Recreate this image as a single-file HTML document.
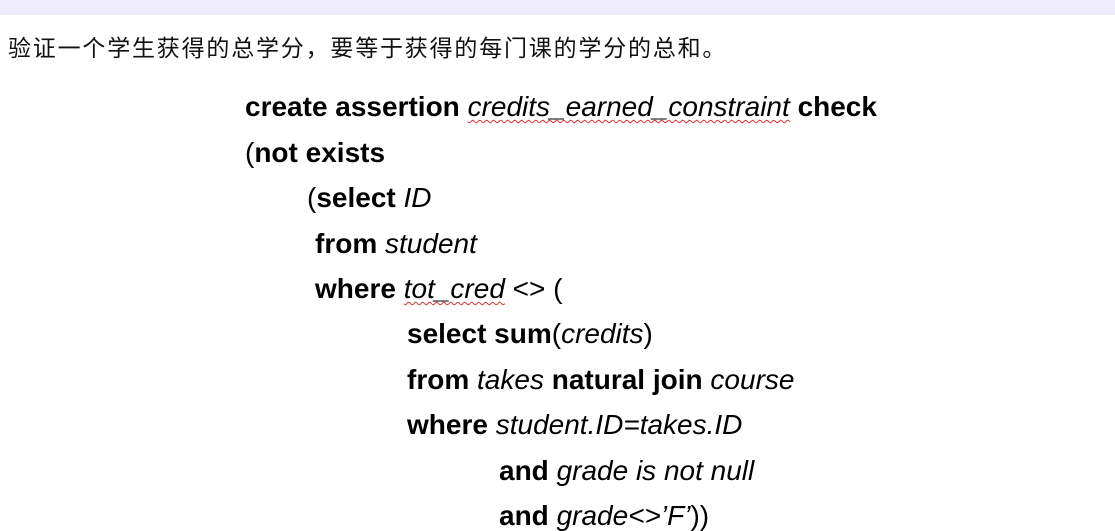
<!DOCTYPE html>
<html><head><meta charset="utf-8"><style>
body{margin:0;width:1115px;height:524px;overflow:hidden;background:#fff;position:relative;font-family:"Liberation Sans",Arial,sans-serif;color:#000}
.bar{position:absolute;left:0;top:0;width:1115px;height:15px;background:#efedfc}
.cn{position:absolute;left:8px;top:34px;font-size:23px;letter-spacing:1.8px;line-height:28px;font-family:"Liberation Sans","Noto Sans CJK SC",sans-serif;color:#111}
.l{position:absolute;font-size:28px;line-height:30px;white-space:nowrap}
b{font-weight:bold}
.w{text-decoration:underline wavy #e03030;text-decoration-thickness:1px;text-underline-offset:3px}
</style></head><body>
<div class="bar"></div>
<div class="cn">验证一个学生获得的总学分，要等于获得的每门课的学分的总和。</div>
<div class="l" style="left:245px;top:92px"><b>create assertion</b> <i class="w">credits_earned_constraint</i> <b>check</b></div>
<div class="l" style="left:245px;top:138px">(<b>not exists</b></div>
<div class="l" style="left:307px;top:183px">(<b>select</b> <i>ID</i></div>
<div class="l" style="left:315px;top:229px"><b>from</b> <i>student</i></div>
<div class="l" style="left:315px;top:274px"><b>where</b> <i class="w">tot_cred</i> &lt;&gt; (</div>
<div class="l" style="left:407px;top:319px"><b>select sum</b>(<i>credits</i>)</div>
<div class="l" style="left:407px;top:365px"><b>from</b> <i>takes</i> <b>natural join</b> <i>course</i></div>
<div class="l" style="left:407px;top:410px"><b>where</b> <i>student.ID=takes.ID</i></div>
<div class="l" style="left:499px;top:456px"><b>and</b> <i>grade is not null</i></div>
<div class="l" style="left:499px;top:501px"><b>and</b> <i>grade&lt;&gt;’F’</i>))</div>
</body></html>
